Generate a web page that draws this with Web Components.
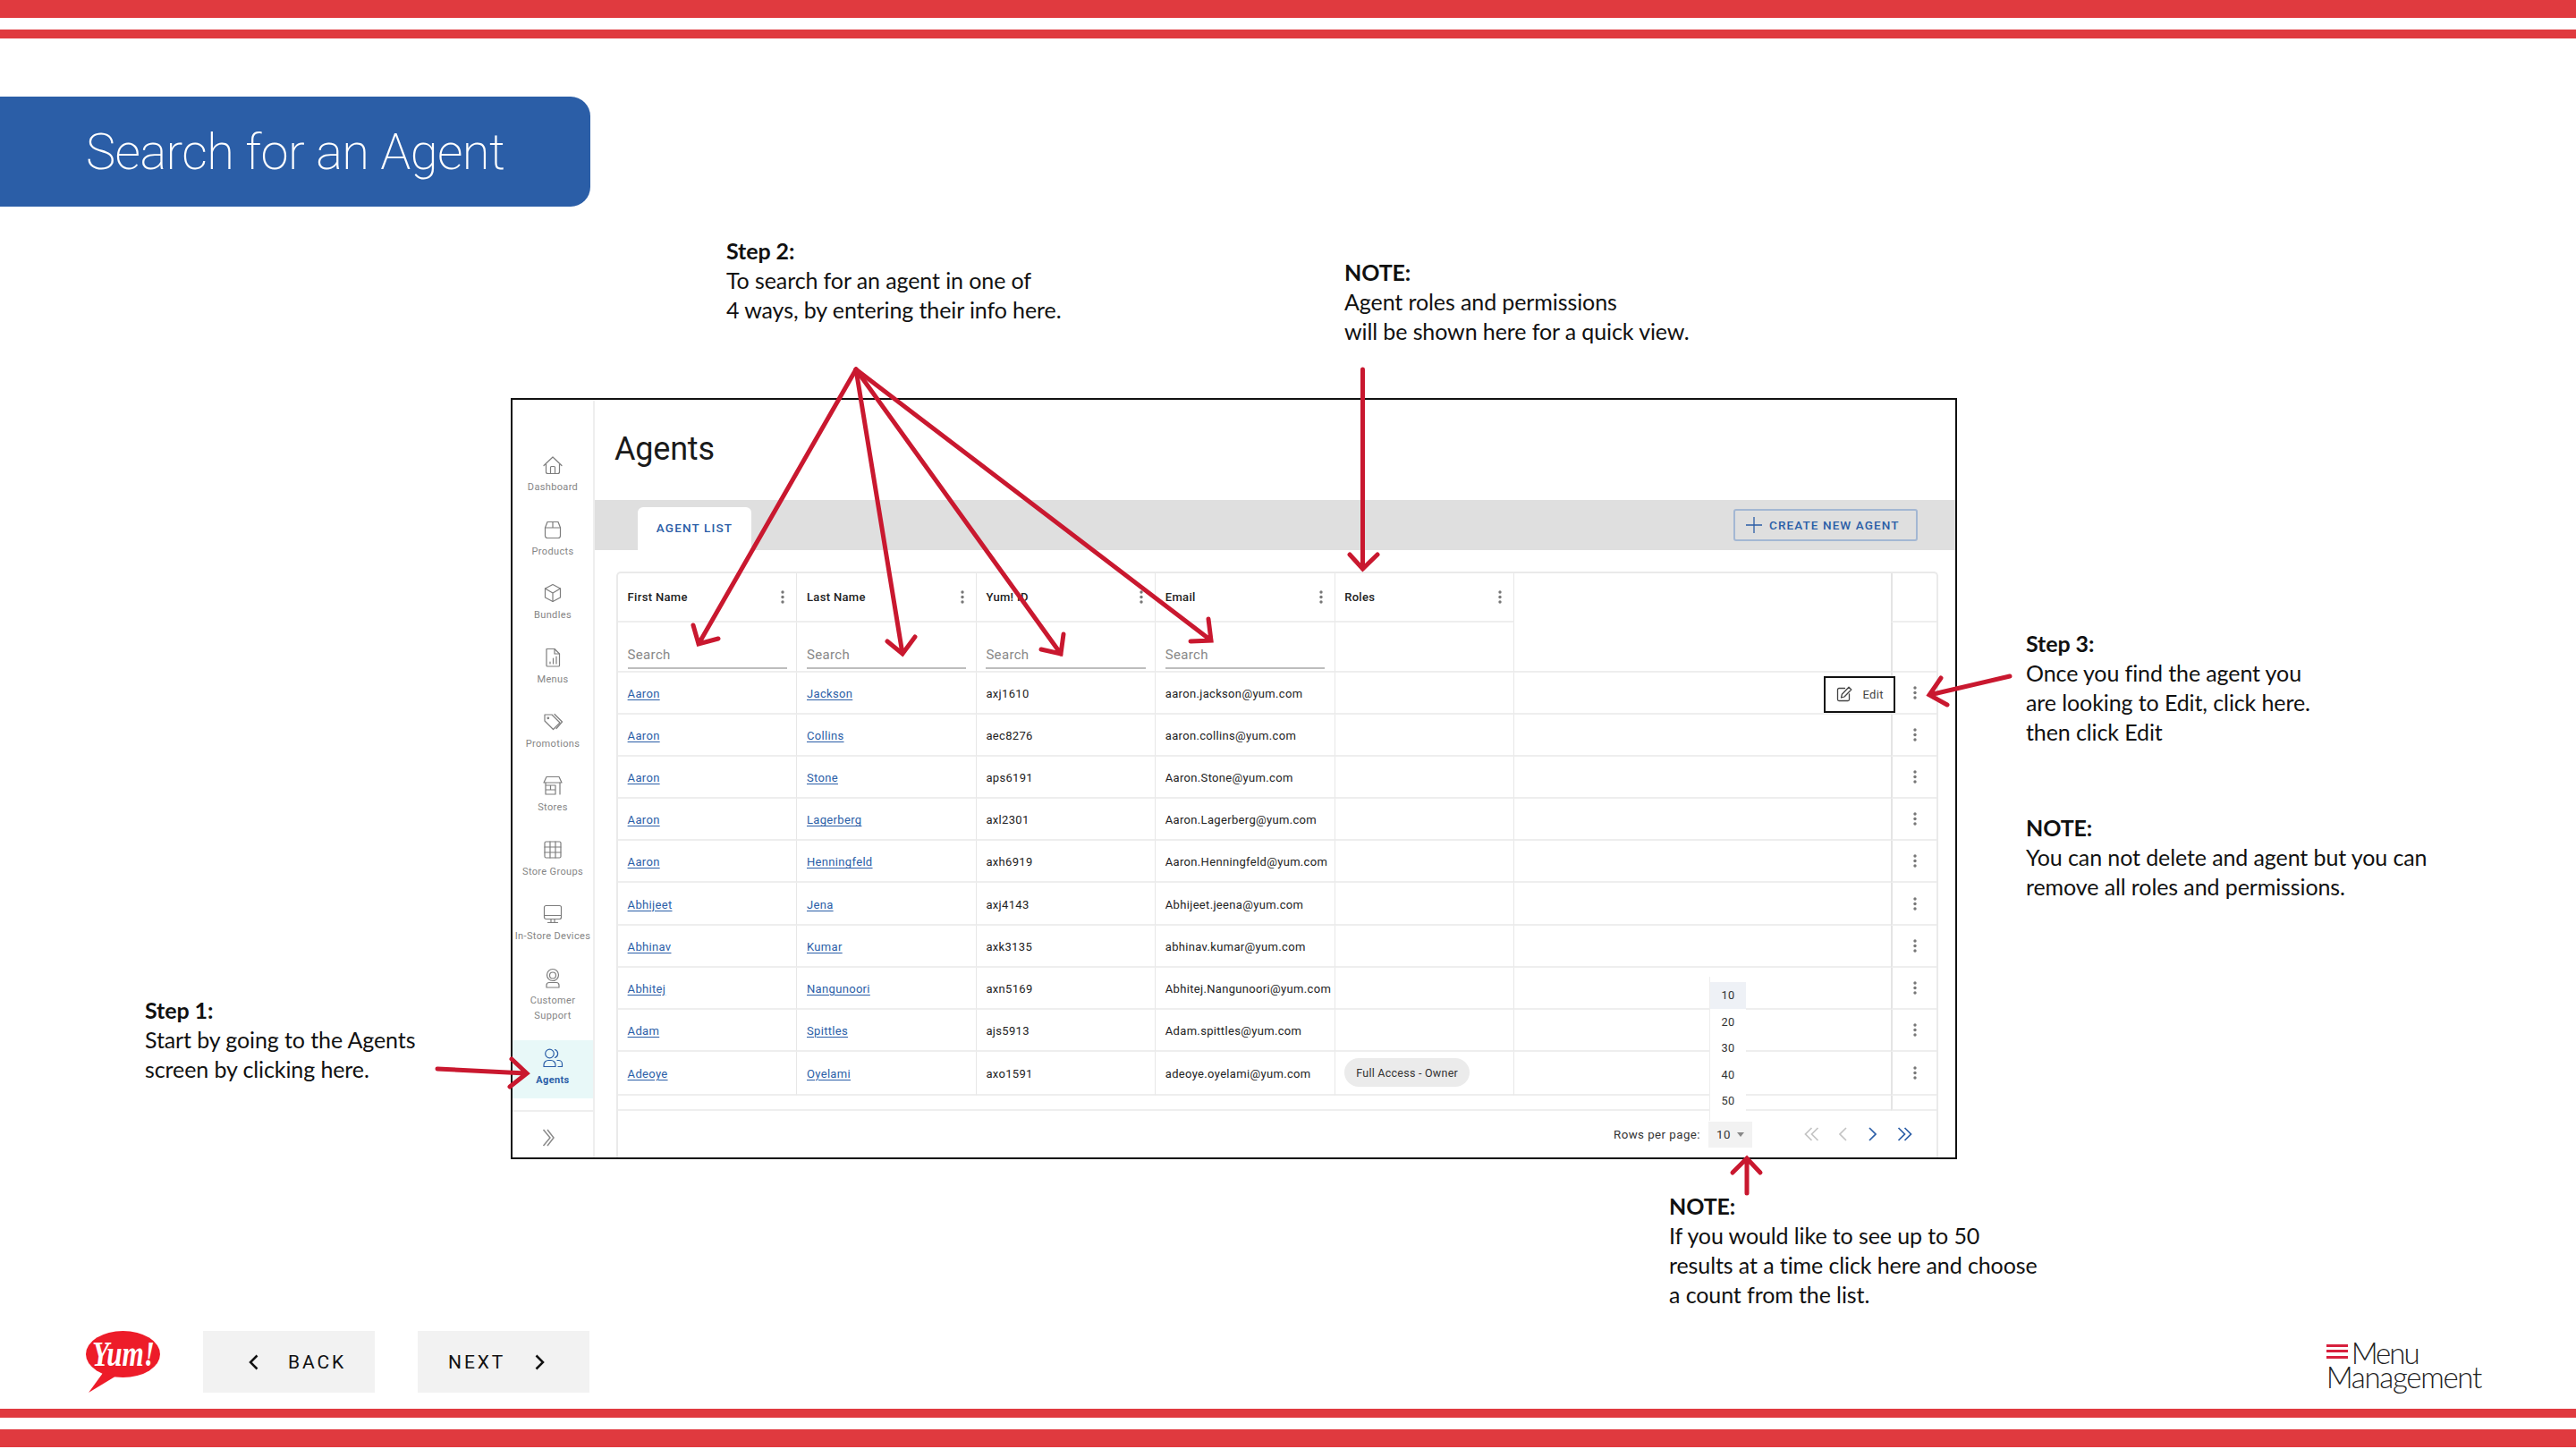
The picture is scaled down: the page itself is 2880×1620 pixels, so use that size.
<!DOCTYPE html>
<html>
<head>
<meta charset="utf-8">
<title>Search for an Agent</title>
<style>
  html, body { margin: 0; padding: 0; background: #fff; }
</style>
</head>
<body>
<slide-deck>
  <slide-stripes></slide-stripes>
  <title-banner>Search for an Agent</title-banner>
  <app-window></app-window>
  <slide-footer></slide-footer>
  <slide-stripes flipped></slide-stripes>

  <callout-note style="left:812px;top:264px" heading="Step 2:">To search for an agent in one of<br>4 ways, by entering their info here.</callout-note>
  <callout-note style="left:1503px;top:288px" heading="NOTE:">Agent roles and permissions<br>will be shown here for a quick view.</callout-note>
  <callout-note style="left:2265px;top:703px" heading="Step 3:">Once you find the agent you<br>are looking to Edit, click here.<br>then click Edit</callout-note>
  <callout-note style="left:2265px;top:909px" heading="NOTE:">You can not delete and agent but you can<br>remove all roles and permissions.</callout-note>
  <callout-note style="left:162px;top:1113px" heading="Step 1:">Start by going to the Agents<br>screen by clicking here.</callout-note>
  <callout-note style="left:1866px;top:1332px" heading="NOTE:">If you would like to see up to 50<br>results at a time click here and choose<br>a count from the list.</callout-note>

  <arrow-layer></arrow-layer>
</slide-deck>

<script>
const BLUE = '#2b5ea7';

class SlideDeck extends HTMLElement {
  constructor() {
    super();
    this.attachShadow({ mode: 'open' });
    this.shadowRoot.innerHTML = `
      <style>
        :host { display: flex; flex-direction: column; position: relative; width: 2880px; height: 1620px; overflow: hidden; background: #fff; }
      </style>
      <slot></slot>`;
  }
}

class SlideStripes extends HTMLElement {
  constructor() {
    super();
    this.attachShadow({ mode: 'open' });
    this.shadowRoot.innerHTML = `
      <style>
        :host { display: flex; flex-direction: column; flex: none; }
        i { display: block; background: #e03a3f; }
        .thick { height: 20px; }
        .thin { height: 10px; }
        .gap { height: 13px; background: #fff; }
        :host([flipped]) { flex-direction: column-reverse; margin-top: 18px; }
      </style>
      <i class="thick"></i><i class="gap"></i><i class="thin"></i>`;
  }
}

class TitleBanner extends HTMLElement {
  constructor() {
    super();
    this.attachShadow({ mode: 'open' });
    this.shadowRoot.innerHTML = `
      <style>
        :host { display: flex; align-items: center; flex: none; box-sizing: border-box; width: 660px; height: 123px; margin-top: 65px; padding-left: 96px; background: ${BLUE}; border-radius: 0 22px 22px 0; color: #fff; font: 200 56px Roboto, sans-serif; letter-spacing: -.6px; }
      </style>
      <slot></slot>`;
  }
}

const ICONS = {
  dashboard: '<path d="M2 12.500 12 3l10 9.500"/><path d="M4.500 11v8.500a2 2 0 0 0 2 2h11a2 2 0 0 0 2-2V11"/><path d="M9.500 21.500v-7a1 1 0 0 1 1-1h3a1 1 0 0 1 1 1v7"/>',
  products: '<path d="M6 3.500h12l2.500 6.500v9a2.500 2.500 0 0 1-2.500 2.500H6A2.500 2.500 0 0 1 3.500 19v-9z"/><path d="M3.500 10h17M12 3.500V10"/>',
  bundles: '<path d="M12 2.500 20.500 7v10L12 21.500 3.500 17V7z"/><path d="M3.500 7 12 12l8.500-5M12 12v9.500"/>',
  menus: '<path d="M5 2.500h9l5.500 5.500v13a1 1 0 0 1-1 1H6a1 1 0 0 1-1-1z"/><path d="M14 2.500V8h5.500M9 19v-2M12.500 19v-6M16 19v-8"/>',
  promotions: '<path d="M3 4h8l9 9-7.500 7.500L3 11z"/><path d="M14 3.500 22.500 12 16 19.500"/><circle cx="6.800" cy="7.800" r=".8"/>',
  stores: '<path d="M5 2.500h14l3 6.500H2z"/><path d="M4 9v13M20 9v13M4 22h11V12H4M4 17h11M9.500 12v5"/>',
  groups: '<rect x="3" y="3" width="18" height="18" rx="1.500"/><path d="M3 9h18M3 15h18M9 3v18M15 3v18"/>',
  devices: '<rect x="2.500" y="2.500" width="19" height="15" rx="2"/><path d="M2.500 13.500h19M10 17.500v3.500M14 17.500v3.500M6.500 21.500h11"/>',
  support: '<circle cx="12" cy="8" r="6.500"/><circle cx="12" cy="8.500" r="3.500"/><path d="M5 22v-2.500a3 3 0 0 1 3-3h8a3 3 0 0 1 3 3V22zM12 14.500h2"/>',
  agents: '<circle cx="8.500" cy="7" r="4.800"/><path d="M14.500 2.500a4.800 4.800 0 0 1 0 9M2 21.500v-2a5 5 0 0 1 5-5h3a5 5 0 0 1 5 5v2zM17 14.500h1.500a4 4 0 0 1 4 4v3H18"/>'
};

class RailItem extends HTMLElement {
  constructor() {
    super();
    this.attachShadow({ mode: 'open' });
    const icon = ICONS[this.getAttribute('icon')];
    this.shadowRoot.innerHTML = `
      <style>
        :host { display: flex; flex-direction: column; align-items: center; box-sizing: border-box; padding: 8px 0 11.500px; margin-bottom: 6.700px; color: #858585; text-align: center; font: 400 11px/17.500px Roboto, sans-serif; letter-spacing: .35px; }
        :host([active]) { background: #e8f8f8; color: ${BLUE}; font-weight: 700; }
        :host([icon=support]) { margin-bottom: 6.500px; }
        svg { width: 24px; height: 24px; margin-bottom: 4px; fill: none; stroke: #7d7d7d; stroke-width: 1.200; stroke-linejoin: round; stroke-linecap: round; }
        :host([active]) svg { stroke: ${BLUE}; }
      </style>
      <svg viewBox="0 0 24 24">${icon}</svg>
      <slot></slot>`;
  }
}

class NavRail extends HTMLElement {
  constructor() {
    super();
    this.attachShadow({ mode: 'open' });
    this.shadowRoot.innerHTML = `
      <style>
        :host { display: flex; flex-direction: column; flex: none; box-sizing: border-box; width: 92px; padding-top: 53px; border-right: 2px solid #eee; }
        .foot { margin-top: auto; height: 53px; border-top: 2px solid #eee; display: flex; align-items: center; padding: 6px 0 0 33px; box-sizing: border-box; }
        svg { width: 14px; height: 20px; fill: none; stroke: #8a8a8a; stroke-width: 1.500; }
      </style>
      <slot></slot>
      <div class="foot"><svg viewBox="0 0 14 20"><path d="M1.500 1 9 10l-7.500 9M6 1l7 9-7 9"/></svg></div>`;
  }
}

class AppWindow extends HTMLElement {
  constructor() {
    super();
    this.attachShadow({ mode: 'open' });
    this.shadowRoot.innerHTML = `
      <style>
        :host { display: flex; flex: none; box-sizing: border-box; width: 1617px; height: 851px; margin: 214px 0 0 571px; border: 2px solid #111; background: #fff; font-family: Roboto, sans-serif; }
        main { flex: 1; min-width: 0; display: flex; flex-direction: column; }
        h1 { margin: 0; height: 112px; box-sizing: border-box; padding: 33px 0 0 22px; font: 400 36px/44px Roboto, sans-serif; letter-spacing: -.2px; color: #1a1a1a; }
        .band { height: 56px; flex: none; background: #dfdfdf; display: flex; align-items: flex-end; justify-content: space-between; padding: 0 42px 0 48px; }
        .tab { width: 127px; height: 48px; box-sizing: border-box; padding-bottom: 2px; background: #fff; border-radius: 6px 6px 0 0; display: flex; align-items: center; justify-content: center; color: ${BLUE}; font: 500 13.500px Roboto, sans-serif; letter-spacing: 1.150px; }
        .create { align-self: center; width: 206px; height: 36px; box-sizing: border-box; border: 2px solid #a3b7d3; border-radius: 3px; display: flex; align-items: center; padding-left: 12px; gap: 8px; color: ${BLUE}; font: 500 13.500px Roboto, sans-serif; letter-spacing: 1.100px; white-space: nowrap; }
        .create svg { width: 18px; height: 18px; stroke: ${BLUE}; stroke-width: 1.300; fill: none; flex: none; }
        agent-table { margin: 24px 19px 0 24px; flex: 1; min-height: 0; }
      </style>
      <nav-rail>
        <rail-item icon="dashboard">Dashboard</rail-item>
        <rail-item icon="products">Products</rail-item>
        <rail-item icon="bundles">Bundles</rail-item>
        <rail-item icon="menus">Menus</rail-item>
        <rail-item icon="promotions">Promotions</rail-item>
        <rail-item icon="stores">Stores</rail-item>
        <rail-item icon="groups">Store Groups</rail-item>
        <rail-item icon="devices">In-Store Devices</rail-item>
        <rail-item icon="support">Customer<br>Support</rail-item>
        <rail-item icon="agents" active>Agents</rail-item>
      </nav-rail>
      <main>
        <h1>Agents</h1>
        <div class="band">
          <div class="tab">AGENT LIST</div>
          <div class="create"><svg viewBox="0 0 18 18"><path d="M9 0v18M0 9h18"/></svg>CREATE NEW AGENT</div>
        </div>
        <agent-table></agent-table>
      </main>`;
  }
}

const AGENTS = [
  ['Aaron', 'Jackson', 'axj1610', 'aaron.jackson@yum.com'],
  ['Aaron', 'Collins', 'aec8276', 'aaron.collins@yum.com'],
  ['Aaron', 'Stone', 'aps6191', 'Aaron.Stone@yum.com'],
  ['Aaron', 'Lagerberg', 'axl2301', 'Aaron.Lagerberg@yum.com'],
  ['Aaron', 'Henningfeld', 'axh6919', 'Aaron.Henningfeld@yum.com'],
  ['Abhijeet', 'Jena', 'axj4143', 'Abhijeet.jeena@yum.com'],
  ['Abhinav', 'Kumar', 'axk3135', 'abhinav.kumar@yum.com'],
  ['Abhitej', 'Nangunoori', 'axn5169', 'Abhitej.Nangunoori@yum.com'],
  ['Adam', 'Spittles', 'ajs5913', 'Adam.spittles@yum.com'],
  ['Adeoye', 'Oyelami', 'axo1591', 'adeoye.oyelami@yum.com']
];

const kebab = '<svg class="kebab" viewBox="0 0 4 15"><circle cx="2" cy="2" r="1.700"/><circle cx="2" cy="7.500" r="1.700"/><circle cx="2" cy="13" r="1.700"/></svg>';

class AgentTable extends HTMLElement {
  constructor() {
    super();
    this.attachShadow({ mode: 'open' });
    const heads = ['First Name', 'Last Name', 'Yum! ID', 'Email', 'Roles']
      .map(h => `<div class="c head"><span>${h}</span>${kebab}</div>`).join('');
    const filters = [0, 1, 2, 3]
      .map(() => '<div class="c filter"><div>Search</div></div>').join('');
    const rows = AGENTS.map((a, i) => {
      const roles = i === 9 ? '<span class="pill">Full Access - Owner</span>' : '';
      return `<div class="c row"><a>${a[0]}</a></div><div class="c row"><a>${a[1]}</a></div>
        <div class="c row">${a[2]}</div><div class="c row">${a[3]}</div><div class="c">${roles}</div>
        <div class="c blank"></div><div class="c pin">${kebab}</div>`;
    }).join('');
    this.shadowRoot.innerHTML = `
      <style>
        :host { display: block; position: relative; box-sizing: border-box; border: 2px solid #eaeaea; border-bottom: 0; border-radius: 5px 5px 0 0; font: 400 13px Roboto, sans-serif; letter-spacing: .33px; color: #222; }
        .grid { display: grid; grid-template-columns: repeat(5, 200.400px) 1fr 51px; grid-template-rows: 55px 56px repeat(9, 47.100px) 49px 17px; }
        .c { box-sizing: border-box; display: flex; align-items: center; padding-left: 10.600px; border-right: 1px solid #e7e7e7; border-bottom: 2px solid #eee; overflow: hidden; white-space: nowrap; min-width: 0; }
        .row { padding-top: 2px; }
        .head { justify-content: space-between; padding-right: 13px; font-weight: 500; color: #222; }
        .filter { align-items: flex-end; padding: 0 10.600px 2px; }
        .filter div { width: 100%; box-sizing: border-box; font-size: 15px; line-height: 24px; padding-bottom: 2px; border-bottom: 2px solid #bdbdbd; color: #888; }
        .filler { grid-column: 6; grid-row: 1 / span 2; border-right: 0; border-bottom: 2px solid #eee; border-left: 0; }
        .blank { border-right: 0; }
        .pin { border-right: 0; border-left: 2px solid #e4e4e4; padding: 0; justify-content: center; }
        .gapcell { grid-column: 1 / span 6; border-right: 0; }
        a { color: ${BLUE}; text-decoration: underline; text-underline-offset: 2px; text-decoration-thickness: 1px; }
        .kebab { width: 4px; height: 15px; fill: #777; flex: none; }
        .pill { box-sizing: border-box; height: 32px; width: 140px; border-radius: 16px; background: #ebebeb; display: flex; align-items: center; justify-content: center; font-size: 12.500px; letter-spacing: .25px; color: #333; }
        .foot { display: flex; align-items: center; justify-content: flex-end; height: 53px; padding-right: 27px; color: #333; font-size: 13.300px; letter-spacing: .45px; }
        .select { box-sizing: border-box; width: 49px; height: 29px; margin: 0 58px 0 9px; padding-left: 9px; background: #f2f2f2; display: flex; align-items: center; gap: 6px; }
        .select i { width: 0; height: 0; border: 4.500px solid transparent; border-top: 5px solid #888; border-bottom: 0; margin-left: 1px; }
        .foot svg { height: 16px; fill: none; stroke-width: 1.700; }
        .off { stroke: #c4c4c4; }
        .on { stroke: ${BLUE}; }
        .edit { position: absolute; left: 1347.500px; top: 114.500px; width: 80px; height: 41px; box-sizing: border-box; border: 2px solid #111; background: #fff; display: flex; align-items: center; padding-left: 12px; gap: 12px; color: #444; }
        .edit svg { width: 18px; height: 18px; fill: none; stroke: #444; stroke-width: 1.300; stroke-linejoin: round; stroke-linecap: round; }
        .menu { position: absolute; left: 1220px; top: 451px; width: 41px; height: 161px; box-sizing: border-box; padding-top: 6px; background: #fff; border-left: 1px solid #eee; text-align: center; font-size: 12.800px; letter-spacing: .2px; color: #333; }
        .menu div { height: 29.600px; line-height: 29.600px; }
        .menu .sel { background: #eef1f6; }
      </style>
      <div class="grid">
        ${heads}
        <div class="c filler"></div>
        <div class="c pin" style="grid-column:7;grid-row:1"></div>
        ${filters}
        <div class="c"></div>
        <div class="c pin" style="grid-column:7;grid-row:2"></div>
        ${rows}
        <div class="c gapcell"></div>
        <div class="c pin"></div>
      </div>
      <div class="foot">
        <span>Rows per page:</span>
        <div class="select">10<i></i></div>
        <svg class="off" viewBox="0 0 17 16" width="17"><path d="M8.500 1 1.500 8l7 7M15.500 1l-7 7 7 7"/></svg>
        <svg class="off" viewBox="0 0 9 16" width="9" style="margin-left:22px"><path d="M8 1 1 8l7 7"/></svg>
        <svg class="on" viewBox="0 0 9 16" width="9" style="margin-left:24px"><path d="m1 1 7 7-7 7"/></svg>
        <svg class="on" viewBox="0 0 17 16" width="17" style="margin-left:23px"><path d="m1.500 1 7 7-7 7M8.500 1l7 7-7 7"/></svg>
      </div>
      <div class="edit"><svg viewBox="0 0 18 18"><path d="M9.500 2.500H3a1.500 1.500 0 0 0-1.500 1.500v11A1.500 1.500 0 0 0 3 16.500h10a1.500 1.500 0 0 0 1.500-1.500V9"/><path d="M14 1.200 16.800 4 9 12l-3.500 1 .8-3.700z"/></svg>Edit</div>
      <div class="menu"><div class="sel">10</div><div>20</div><div>30</div><div>40</div><div>50</div></div>`;
  }
}

class NavButton extends HTMLElement {
  constructor() {
    super();
    this.attachShadow({ mode: 'open' });
    const back = this.hasAttribute('back');
    const chev = back
      ? '<svg viewBox="0 0 11 18"><path d="M9.500 1.500 2 9l7.500 7.500"/></svg>'
      : '<svg viewBox="0 0 11 18"><path d="M1.500 1.500 9 9l-7.500 7.500"/></svg>';
    this.shadowRoot.innerHTML = `
      <style>
        :host { display: flex; align-items: center; gap: 33px; flex: none; box-sizing: border-box; width: 192px; height: 69px; padding-left: 34.500px; background: #f2f2f2; color: #111; font: 400 21px Roboto, sans-serif; letter-spacing: 2.900px; }
        :host([back]) { padding-left: 51.500px; }
        svg { width: 11px; height: 18px; fill: none; stroke: #111; stroke-width: 2.500; }
      </style>
      ${back ? chev : ''}<slot></slot>${back ? '' : chev}`;
  }
}

class YumLogo extends HTMLElement {
  constructor() {
    super();
    this.attachShadow({ mode: 'open' });
    this.shadowRoot.innerHTML = `
      <style>
        :host { display: block; flex: none; width: 84px; height: 69px; margin: 0 46.500px 0 96px; }
        svg { display: block; overflow: visible; }
      </style>
      <svg width="84" height="69" viewBox="0 0 84 69">
        <ellipse cx="41.500" cy="26" rx="41.500" ry="26" fill="#ed1c29"/>
        <path d="M19 47 3 69 36 49z" fill="#ed1c29"/>
        <text x="7" y="39" textLength="70" lengthAdjust="spacingAndGlyphs" fill="#fff" font-family="Liberation Serif" font-weight="700" font-style="italic" font-size="39">Yum!</text>
      </svg>`;
  }
}

class MenuLogo extends HTMLElement {
  constructor() {
    super();
    this.attachShadow({ mode: 'open' });
    this.shadowRoot.innerHTML = `
      <style>
        :host { display: block; flex: none; margin: 11px 106px 0 auto; color: #222; font: 300 33px/27px Lato, sans-serif; letter-spacing: -1.300px; }
        .line { display: flex; align-items: center; gap: 4px; }
        .bars { display: flex; flex-direction: column; gap: 3.500px; margin-top: -4px; }
        .bars i { display: block; width: 24px; height: 3px; background: #d7203d; }
        .menu { letter-spacing: -2px; }
      </style>
      <div class="line"><span class="bars"><i></i><i></i><i></i></span><span class="menu">Menu</span></div>
      <div>Management</div>`;
  }
}

class SlideFooter extends HTMLElement {
  constructor() {
    super();
    this.attachShadow({ mode: 'open' });
    this.shadowRoot.innerHTML = `
      <style>
        :host { display: flex; flex: none; height: 69px; margin-top: 192px; }
        nav-button + nav-button { margin-left: 48px; }
      </style>
      <yum-logo></yum-logo>
      <nav-button back>BACK</nav-button>
      <nav-button>NEXT</nav-button>
      <menu-logo></menu-logo>`;
  }
}

class CalloutNote extends HTMLElement {
  constructor() {
    super();
    this.attachShadow({ mode: 'open' });
    this.shadowRoot.innerHTML = `
      <style>
        :host { display: block; position: absolute; white-space: nowrap; color: #111; font: 400 25px/33px Lato, sans-serif; letter-spacing: -.1px; }
        b { display: block; font-weight: 700; }
      </style>
      <b>${this.getAttribute('heading')}</b><slot></slot>`;
  }
}

class ArrowLayer extends HTMLElement {
  constructor() {
    super();
    this.attachShadow({ mode: 'open' });
    const lines = [
      'M957 413 781 720M775 699l6 21 22-6',
      'M957 413 1009 731M992 717l17 14 14-19',
      'M957 413 1186 731M1189 709l-3 22-22-5',
      'M957 413 1354 716M1351 692l3 24-23 1',
      'M1523.500 413V636M1509 620l14.500 16 16.500-16',
      'M2247 756 2157 777M2170 758l-13 19 20 11',
      'M489 1195 588 1200M572 1184l17 16-19 15',
      'M1953 1334V1295M1937 1311l16-16 15 16'
    ];
    this.shadowRoot.innerHTML = `
      <style>
        :host { display: block; position: absolute; inset: 0; pointer-events: none; }
        svg { display: block; fill: none; stroke: #c9182f; stroke-width: 5; stroke-linecap: round; stroke-linejoin: miter; }
      </style>
      <svg width="2880" height="1620" viewBox="0 0 2880 1620">${lines.map(d => `<path d="${d}"/>`).join('')}</svg>`;
  }
}

customElements.define('slide-deck', SlideDeck);
customElements.define('slide-stripes', SlideStripes);
customElements.define('title-banner', TitleBanner);
customElements.define('rail-item', RailItem);
customElements.define('nav-rail', NavRail);
customElements.define('agent-table', AgentTable);
customElements.define('app-window', AppWindow);
customElements.define('nav-button', NavButton);
customElements.define('yum-logo', YumLogo);
customElements.define('menu-logo', MenuLogo);
customElements.define('slide-footer', SlideFooter);
customElements.define('callout-note', CalloutNote);
customElements.define('arrow-layer', ArrowLayer);
</script>
</body>
</html>
